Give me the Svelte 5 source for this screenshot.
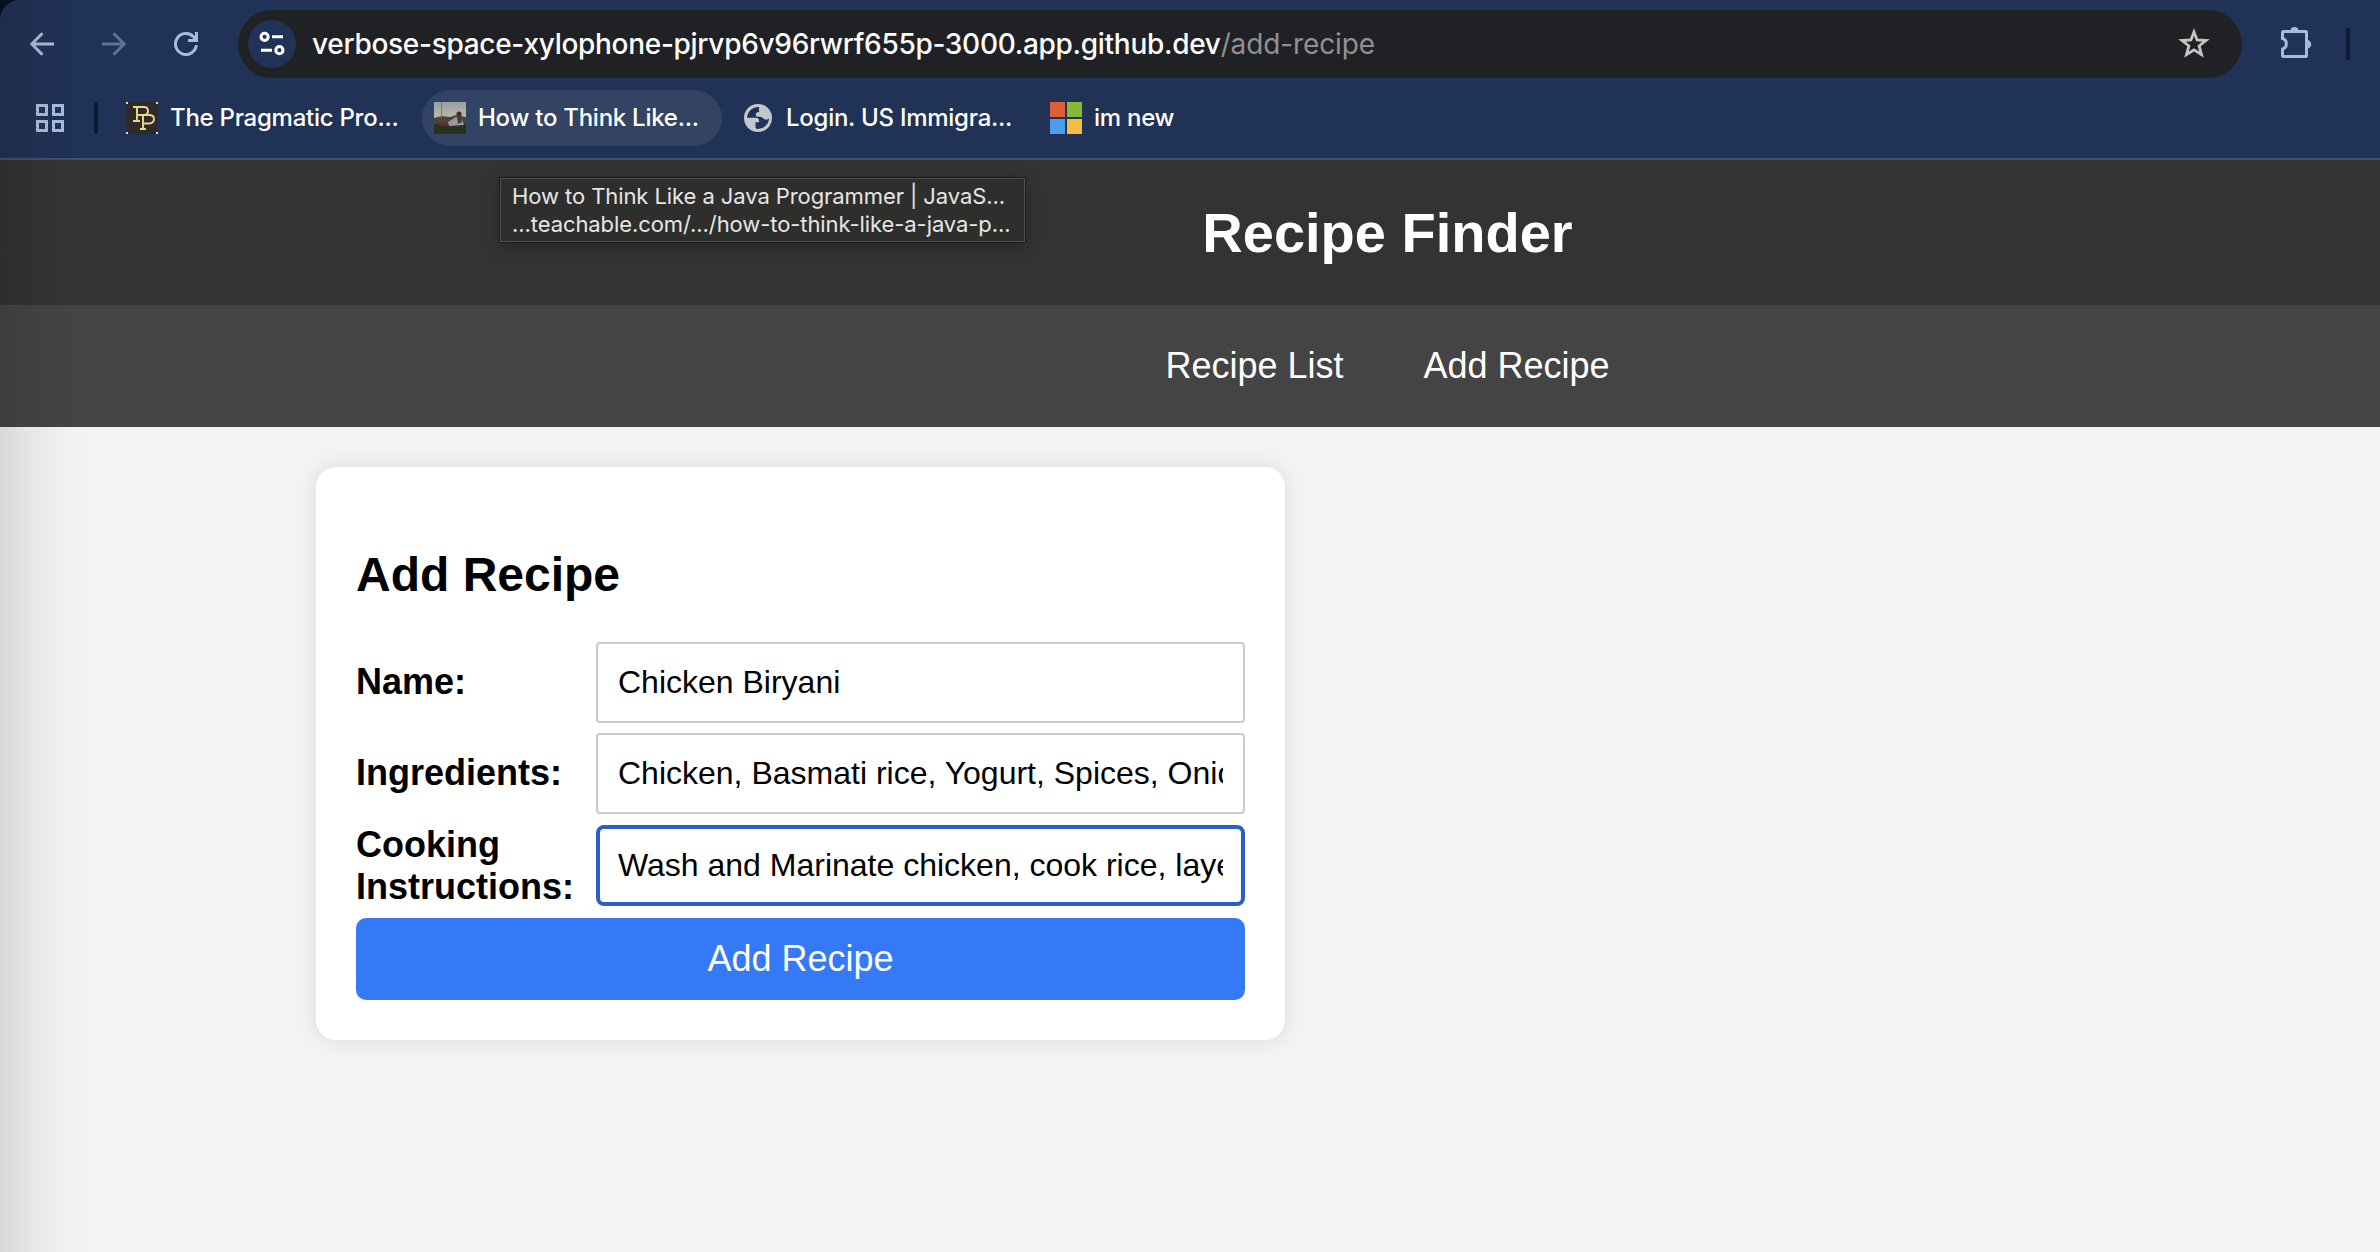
<script>
  let name = $state('Chicken Biryani');
  let ingredients = $state('Chicken, Basmati rice, Yogurt, Spices, Onions, Tomatoes');
  let instructions = $state('Wash and Marinate chicken, cook rice, layer and steam');
</script>

<div class="window">
  <div class="chrome">
    <div class="toolbar">
      <div class="navicons">
        <svg width="24" height="24" viewBox="0 0 24 24"><path d="M24 12H2M12.5 1.2 1.8 12l10.7 10.8" /></svg>
        <svg class="dim" width="24" height="24" viewBox="0 0 24 24"><path d="M0 12h22M11.5 1.2 22.2 12 11.5 22.8" /></svg>
        <svg width="24" height="24" viewBox="0 0 24 24"><path d="M22.4 13.2A10.5 10.5 0 1 1 19.8 5L22 8M22.5 0v8.500h-8.500" /></svg>
      </div>
      <div class="omnibox">
        <span class="site">
          <svg width="26" height="26" viewBox="0 0 26 26"><circle cx="5.6" cy="5.8" r="3.6" /><path d="M13 5.800h11M2 19.200h11" /><circle cx="20.4" cy="19.2" r="3.6" /></svg>
        </span>
        <span class="url">verbose-space-xylophone-pjrvp6v96rwrf655p-3000.app.github.dev<i>/add-recipe</i></span>
        <svg class="star" width="32" height="32" viewBox="0 0 32 32"><path d="M16 3.9l3.1 8.1 8.9.5-6.9 5.5 2.4 8.6L16 21.9l-7.5 4.7 2.4-8.6L4 12.5l8.9-.5z" /></svg>
      </div>
      <svg class="puzzle" width="34" height="34" viewBox="0 0 34 34"><path d="M4.500 5.500h22a1 1 0 0 1 1 1v23a1 1 0 0 1-1 1h-22a1 1 0 0 1-1-1v-6.500a5.500 5.500 0 0 0 0-10.500v-6a1 1 0 0 1 1-1z" /><path class="solid" d="M11.500 5a4 4 0 0 1 8 0zM28 14a4 4 0 0 1 0 8.500z" /></svg>
      <span class="sep"></span>
    </div>

    <div class="bookmarks">
      <svg class="apps" width="28" height="28" viewBox="0 0 28 28"><path d="M1.500 1.500h9v9h-9zM17.500 1.500h9v9h-9zM1.500 17.500h9v9h-9zM17.500 17.500h9v9h-9z" /></svg>
      <span class="sep"></span>
      <div class="bm first">
        <svg width="32" height="32" viewBox="0 0 32 32"><rect width="32" height="32" fill="#2c2b29" /><path d="M0 0h2v2H0zM30 0h2v2h-2zM0 30h2v2H0zM30 30h2v2h-2z" fill="#ddd" /><path d="M7 5h11q4 0 4 4T18 13h-6M11 5v14M7 19h7M13 13h10q5 0 5 4T23 21.500h-5M17 13v14M14 27h6" fill="none" stroke="#f0d58b" stroke-width="1.900" /></svg>
        <span>The Pragmatic Pro...</span>
      </div>
      <div class="bm hover">
        <svg width="32" height="32" viewBox="0 0 32 32"><defs><linearGradient id="sky" x2="0" y2="1"><stop offset="0" stop-color="#98a09f" /><stop offset="1" stop-color="#c4bdae" /></linearGradient></defs><rect width="32" height="18" fill="url(#sky)" /><path d="M0 16l8-2 8 1 6-2 10 2v17H0z" fill="#45483f" /><path d="M0 22h32v10H0z" fill="#26321b" /><path d="M2 21l4-2 8 1 2 3-9 1z" fill="#6d2a30" /><path d="M14 20l8-5 5 1 2 4 1 3-15 1z" fill="#9d979c" /><circle cx="25" cy="12" r="2.600" fill="#4a2d24" /><path d="M23 14h4l1 6-4 2z" fill="#4a3a35" /><path d="M7.500 0v16" stroke="#6d7a80" /></svg>
        <span>How to Think Like...</span>
      </div>
      <div class="bm globe">
        <svg width="28" height="28" viewBox="0 0 28 28"><circle cx="14" cy="14" r="14" fill="#c4c7cc" /><path d="M15.500 3C9 2.500 3.500 7 3 13.800h9c1.800 0 3 1 3 2.700v1.700h-3.500V23c0 1 .8 1.900 2 1.900C20 25 25 20 25 14c-1 1.600-2.600 2-4 1.400-1.600-.6-2.400-2-4.200-2.400-2-.4-4.800.3-5-1.900-.2-2 1-3 3.300-3 .4-1.500-.8-3 .4-5.100z" fill="#203255" /></svg>
        <span>Login. US Immigra...</span>
      </div>
      <div class="bm ms">
        <svg width="32" height="32" viewBox="0 0 32 32"><path fill="#e05d35" d="M0 0h15v15H0z" /><path fill="#8ab734" d="M17 0h15v15H17z" /><path fill="#4aa0ea" d="M0 17h15v15H0z" /><path fill="#f6bd41" d="M17 17h15v15H17z" /></svg>
        <span>im new</span>
      </div>
    </div>
  </div>

  <div class="page">
    <header><h1>Recipe Finder</h1></header>
    <nav><a href="#list">Recipe List</a><a href="#add">Add Recipe</a></nav>
    <main>
      <form class="card" onsubmit={(e) => e.preventDefault()}>
        <h2>Add Recipe</h2>
        <div class="row"><label for="name">Name:</label><input id="name" bind:value={name} /></div>
        <div class="row"><label for="ing">Ingredients:</label><input id="ing" bind:value={ingredients} /></div>
        <div class="row tall"><label for="ins">Cooking Instructions:</label><input id="ins" class="active" bind:value={instructions} /></div>
        <button>Add Recipe</button>
      </form>
    </main>
  </div>

  <div class="tooltip">
    <div>How to Think Like a Java Programmer | JavaS...</div>
    <div>...teachable.com/.../how-to-think-like-a-java-p...</div>
  </div>
  <div class="edge"></div>
  <div class="corner"></div>
</div>

<style>
  :global(body) { margin: 0; overflow: hidden; }
  .window { position: relative; width: 2380px; height: 1252px; overflow: hidden; background: #f3f3f3; font-family: Inter, "Liberation Sans", sans-serif; }
  .window * { box-sizing: border-box; }
  svg { flex: none; display: block; }
  .chrome { height: 160px; background: #203255; border-bottom: 2px solid #3c5079; }
  .toolbar { display: flex; align-items: center; height: 88px; }
  .navicons { display: flex; gap: 48px; padding-left: 30px; width: 238px; }
  .navicons path { fill: none; stroke: #a9bbdd; stroke-width: 3; }
  .navicons .dim path { stroke: #5f7196; }
  .omnibox { display: flex; align-items: center; width: 2004px; height: 68px; padding: 0 32px 0 10px; border-radius: 34px; background: #202124; }
  .site { display: flex; align-items: center; justify-content: center; width: 48px; height: 48px; border-radius: 50%; background: #203255; }
  .site svg { fill: none; stroke: #fff; stroke-width: 3; }
  .url { flex: 1; margin-left: 16px; font-size: 28px; font-weight: 500; letter-spacing: -0.29px; color: #fff; white-space: nowrap; }
  .url i { font-style: normal; font-weight: 400; letter-spacing: -0.12px; color: #909194; }
  .star path { fill: none; stroke: #c4c4c4; stroke-width: 2.8; }
  .puzzle { margin-left: 37px; margin-top: -3px; }
  .puzzle path { fill: none; stroke: #a9bbdd; stroke-width: 3; }
  .puzzle .solid { fill: #a9bbdd; stroke: none; }
  .sep { flex: none; width: 4px; height: 32px; border-radius: 2px; background: #0d1a33; }
  .toolbar .sep { margin-left: 33px; }
  .bookmarks { display: flex; align-items: center; height: 60px; padding-left: 36px; }
  .apps path { fill: none; stroke: #a9bbdd; stroke-width: 3; }
  .bookmarks .sep { margin-left: 30px; }
  .bm { display: flex; align-items: center; height: 56px; gap: 12px; font-size: 24px; font-weight: 500; letter-spacing: -0.26px; color: #fff; white-space: nowrap; }
  .bm span { padding-bottom: 2px; }
  .first { width: 296px; margin-left: 28px; }
  .hover { width: 300px; padding-left: 12px; border-radius: 28px; background: #324363; }
  .globe { width: 306px; margin-left: 22px; gap: 14px; }
  .page { width: 2775px; font-family: "Liberation Sans", Arial, sans-serif; }
  header { display: flex; align-items: center; justify-content: center; height: 145px; background: #333; }
  h1 { margin: 0; font-size: 56px; color: #fff; }
  nav { display: flex; align-items: center; justify-content: center; gap: 80px; height: 122px; background: #444; }
  nav a { font-size: 36px; color: #fff; text-decoration: none; }
  main { padding: 40px 0 0 316px; }
  .card { width: 969px; height: 573px; padding: 40px; border-radius: 20px; background: #fff; box-shadow: 0 0 20px rgba(0, 0, 0, 0.1); }
  h2 { margin: 40px 0 39px; font-size: 48px; line-height: 56px; color: #000; }
  .row { display: flex; align-items: center; height: 81px; margin-bottom: 10px; }
  .row label { padding-bottom: 2px; }
  .tall { height: 83px; margin-bottom: 11px; }
  .tall label { padding-bottom: 0; }
  label { width: 240px; font-size: 36px; font-weight: bold; line-height: 42px; color: #000; }
  input { width: 649px; height: 81px; padding: 0 20px; border: 2px solid #ccc; border-radius: 4px; background: #fff; font: 32px "Liberation Sans", Arial, sans-serif; color: #000; outline: none; }
  .active { padding: 0 18px; border: 4px solid #2960c8; border-radius: 8px; }
  button { display: block; width: 100%; height: 82px; border: 0; border-radius: 10px; background: #3579f6; font: 36px "Liberation Sans", Arial, sans-serif; color: #fff; }
  .tooltip { position: absolute; left: 499px; top: 177px; width: 527px; height: 66px; padding: 4px 12px; border: 1px solid #1c1c1c; background: #2e2e2d; box-shadow: inset 0 0 0 1px #505050, 0 4px 14px rgba(0, 0, 0, 0.25); font-size: 22px; line-height: 28px; letter-spacing: -0.08px; color: #e6e6e6; white-space: nowrap; }
  .edge { position: absolute; left: 0; top: 0; width: 90px; height: 1252px; background: linear-gradient(to right, rgba(0, 0, 0, 0.11), rgba(0, 0, 0, 0.055) 33%, rgba(0, 0, 0, 0.012) 68%, transparent); pointer-events: none; }
  .corner { position: absolute; left: 0; top: 0; width: 20px; height: 20px; background: radial-gradient(circle at 20px 20px, transparent 19.500px, #07101f 20.500px); }
</style>
